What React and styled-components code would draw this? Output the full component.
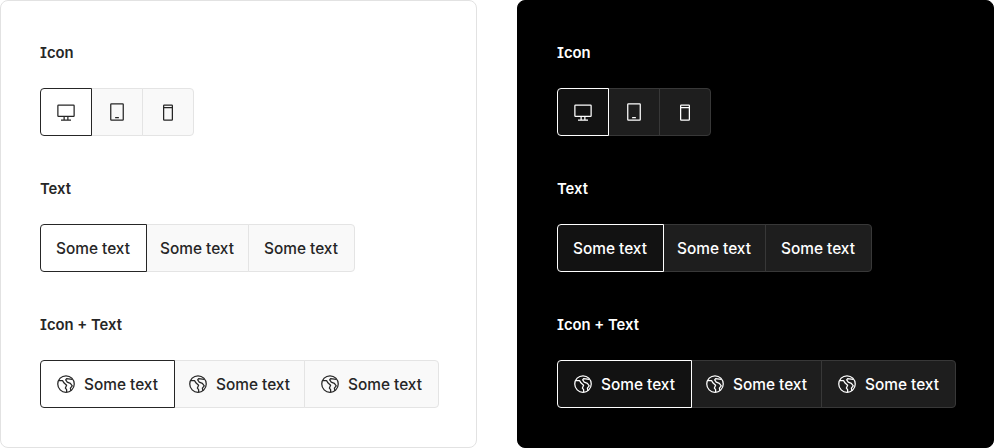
import React from "react";
import styled, { createGlobalStyle, ThemeProvider } from "styled-components";

const GlobalStyle = createGlobalStyle`
  * { box-sizing: border-box; }
  body { margin: 0; background: #fff; }
`;

const light = {
  panel: "#ffffff", panelBorder: "#e2e2e2", text: "#262626",
  item: "#f9f9f9", itemBorder: "#e4e4e4", active: "#ffffff", activeBorder: "#262626",
};
const dark = {
  panel: "#000000", panelBorder: "#000000", text: "#ffffff",
  item: "#1e1e1e", itemBorder: "#383838", active: "#121212", activeBorder: "#ffffff",
};

const Page = styled.main`
  display: flex;
  justify-content: space-between;
  width: 994px;
  height: 448px;
  font-family: Inter, "Noto Sans", sans-serif;
  font-feature-settings: "cv08" 1;
  font-size: 15.4px;
`;
const Panel = styled.section`
  display: flex;
  flex-direction: column;
  gap: 40px;
  width: 477px;
  padding: 39px 39px 0;
  border: 1px solid ${({ theme }) => theme.panelBorder};
  border-radius: 8px;
  background: ${({ theme }) => theme.panel};
  color: ${({ theme }) => theme.text};
`;
const Group = styled.div`
  display: flex;
  flex: none;
  flex-direction: column;
  align-items: flex-start;
  gap: 24px;
`;
const Heading = styled.h2`
  margin: 0;
  height: 24px;
  font-size: 14.8px;
  font-weight: 600;
  line-height: 27px;
`;
const Switcher = styled.div`
  display: flex;
`;
const Segment = styled.button`
  display: flex;
  align-items: center;
  gap: 8px;
  width: ${({ $width }) => $width}px;
  height: 48px;
  padding: 0 0 0 ${({ $inset }) => $inset}px;
  border: 1px solid ${({ theme, $active }) => ($active ? theme.activeBorder : theme.itemBorder)};
  background: ${({ theme, $active }) => ($active ? theme.active : theme.item)};
  color: inherit;
  font: inherit;
  font-weight: 500;
  white-space: nowrap;
  position: relative;
  z-index: ${({ $active }) => ($active ? 1 : 0)};
  & + & { margin-left: -1px; }
  &:first-child { border-radius: 4px 0 0 4px; }
  &:last-child { border-radius: 0 4px 4px 0; }
`;
const Label = styled.span`
  padding-top: 1px;
  line-height: 24px;
`;
const Svg = styled.svg`
  display: block;
  flex: none;
  width: 20px;
  height: 20px;
  fill: currentColor;
`;

const Screen = () => (
  <Svg viewBox="0 0 32 32"><path d="M28,4H4A2,2,0,0,0,2,6V22a2,2,0,0,0,2,2h8v4H8v2H24V28H20V24h8a2,2,0,0,0,2-2V6A2,2,0,0,0,28,4ZM18,28H14V24h4Zm10-6H4V6H28Z" /></Svg>
);
const Tablet = () => (
  <Svg viewBox="0 0 32 32"><path d="M13,24h6v2H13Z" /><path d="M25,30H7a2,2,0,0,1-2-2V4A2,2,0,0,1,7,2H25a2,2,0,0,1,2,2V28A2,2,0,0,1,25,30ZM7,4V28H25V4Z" /></Svg>
);
const Mobile = () => (
  <Svg viewBox="0 0 32 32"><path d="M22,4H10A2,2,0,0,0,8,6V28a2,2,0,0,0,2,2H22a2,2,0,0,0,2-2V6A2,2,0,0,0,22,4Zm0,2V8H10V6ZM10,28V10H22V28Z" /></Svg>
);
const Globe = () => (
  <Svg viewBox="0 0 32 32">
    <g fill="none" stroke="currentColor" strokeWidth="2" strokeLinejoin="round">
      <circle cx="16" cy="16" r="13.2" />
      <path d="M4.500 10.500h6l2.500 4 4 3.500-2 4.500 2 2.500v4" />
      <path d="M26 8.500 17 7.500l-1.500 2 2.500 3.500 5 2 3 4-3 3.500 1 5" />
    </g>
  </Svg>
);

const groups = [
  { title: "Icon", width: [52, 52, 52], icons: [Screen, Tablet, Mobile] },
  { title: "Text", width: [107, 103, 107], label: "Some text" },
  { title: "Icon + Text", width: [135, 131, 135], icons: [Globe, Globe, Globe], label: "Some text" },
];

const Showcase = () => (
  <Panel>
    {groups.map(({ title, width, icons, label }) => (
      <Group key={title}>
        <Heading>{title}</Heading>
        <Switcher>
          {width.map((w, i) => {
            const Icon = icons?.[i];
            return (
              <Segment key={i} type="button" $width={w} $inset={label && i === 1 ? 13 : 15} $active={i === 0}>
                {Icon && <Icon />}
                {label && <Label>{label}</Label>}
              </Segment>
            );
          })}
        </Switcher>
      </Group>
    ))}
  </Panel>
);

export default function App() {
  return (
    <>
      <GlobalStyle />
      <Page>
        <ThemeProvider theme={light}><Showcase /></ThemeProvider>
        <ThemeProvider theme={dark}><Showcase /></ThemeProvider>
      </Page>
    </>
  );
}
